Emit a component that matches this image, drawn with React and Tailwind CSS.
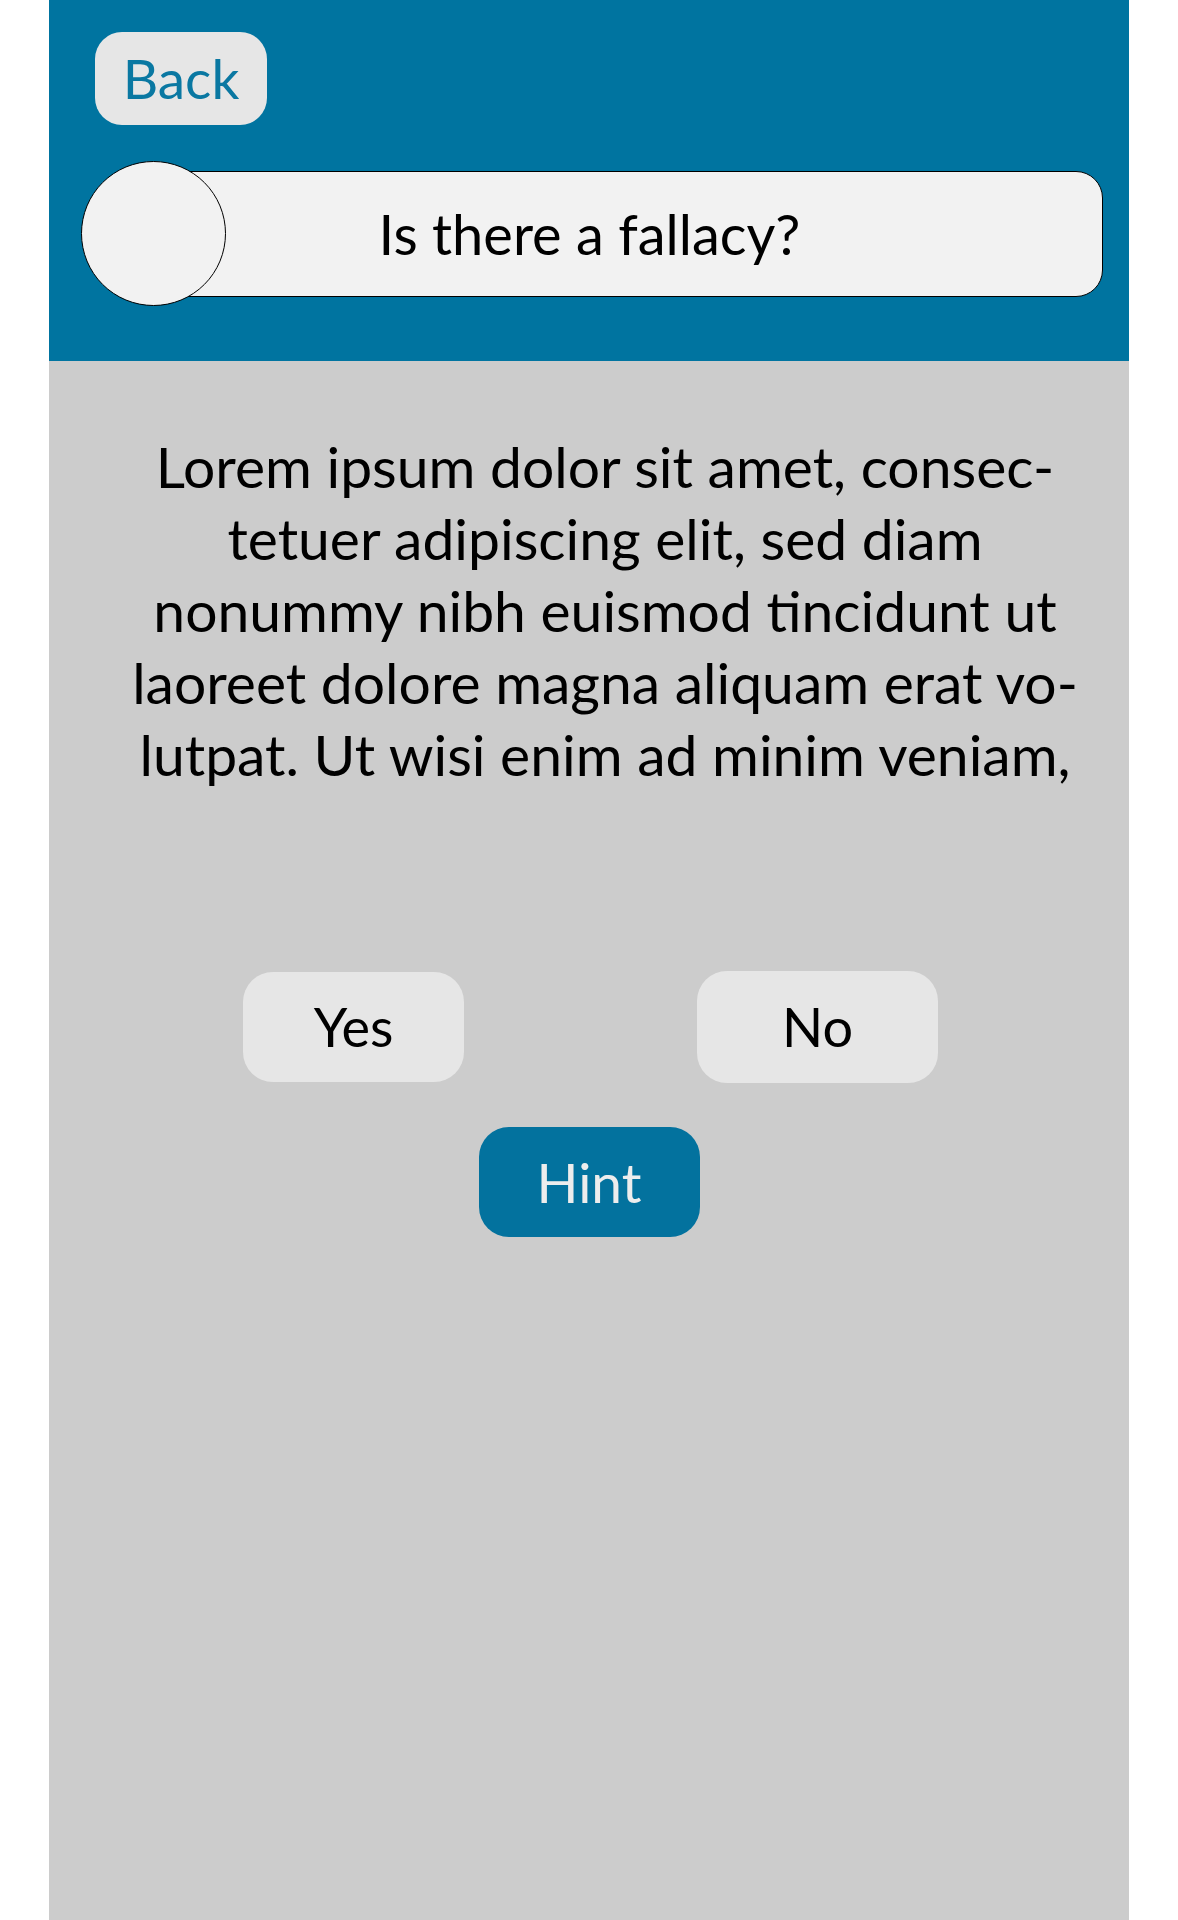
export default function App() {
  const lines = [
    "Lorem ipsum dolor sit amet, consec-",
    "tetuer adipiscing elit, sed diam",
    "nonummy nibh euismod tincidunt ut",
    "laoreet dolore magna aliquam erat vo-",
    "lutpat. Ut wisi enim ad minim veniam,",
  ];

  return (
    <div
      className="min-h-screen bg-white flex"
      style={{ fontFamily: "Lato, 'Open Sans', sans-serif" }}
    >
      <div className="ml-[49px] w-[1080px] min-h-screen flex flex-col bg-[#cccccc]">
        {/* Header */}
        <header className="bg-[#0074a0] h-[361px] flex flex-col pt-[32px]">
          <button className="ml-[46px] w-[172px] h-[93px] rounded-[27px] bg-[#e6e6e6] text-[#0a78a2] text-[55px] leading-none flex items-center justify-center">
            Back
          </button>

          <div className="mt-[36px] ml-[32px] mr-[26px] flex items-center">
            <div className="relative z-10 w-[145px] h-[145px] shrink-0 rounded-full bg-[#f2f2f2] border border-black" />
            <div className="-ml-[72px] flex-1 h-[126px] bg-[#f2f2f2] border border-black rounded-r-[27px] flex items-center justify-center pr-[78px]">
              <span className="text-[56px] leading-none text-black">
                Is there a fallacy?
              </span>
            </div>
          </div>
        </header>

        {/* Question */}
        <div className="pt-[69px] pl-[80px] pr-[48px] text-center text-black text-[57px] leading-[72px]">
          {lines.map((line) => (
            <div key={line} className="whitespace-nowrap">
              {line}
            </div>
          ))}
        </div>

        {/* Answers */}
        <div className="mt-[181px] flex items-center pl-[194px] gap-[233px]">
          <button className="w-[221px] h-[110px] rounded-[30px] bg-[#e6e6e6] text-black text-[54px] leading-none flex items-center justify-center">
            Yes
          </button>
          <button className="w-[241px] h-[112px] rounded-[30px] bg-[#e6e6e6] text-black text-[54px] leading-none flex items-center justify-center">
            No
          </button>
        </div>

        <div className="mt-[44px] flex justify-center">
          <button className="w-[221px] h-[110px] rounded-[30px] bg-[#03729e] text-[#ededed] text-[55px] leading-none flex items-center justify-center">
            Hint
          </button>
        </div>
      </div>
    </div>
  );
}
